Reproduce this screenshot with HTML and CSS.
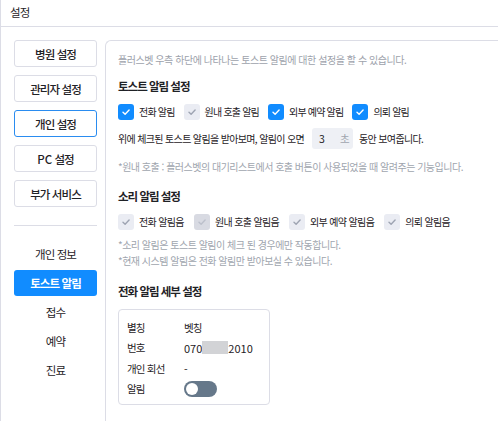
FILE: index.html
```html
<!DOCTYPE html>
<html lang="ko">
<head>
<meta charset="utf-8">
<link rel="stylesheet" href="styles.css">
</head>
<body>
<div class="window">
  <header class="header">설정</header>
  <div class="body">
    <nav class="sidebar">
      <div class="tab">병원 설정</div>
      <div class="tab">관리자 설정</div>
      <div class="tab active">개인 설정</div>
      <div class="tab"><span class="num">PC</span>&nbsp;설정</div>
      <div class="tab">부가 서비스</div>
      <div class="divider"></div>
      <div class="sub">개인 정보</div>
      <div class="sub selected">토스트 알림</div>
      <div class="sub">접수</div>
      <div class="sub">예약</div>
      <div class="sub">진료</div>
    </nav>
    <main class="panel">
      <p class="desc">플러스벳 우측 하단에 나타나는 토스트 알림에 대한 설정을 할 수 있습니다.</p>
      <h2 class="title">토스트 알림 설정</h2>
      <div class="checks">
        <label class="chk"><span class="box on"><svg viewBox="0 0 16 16"><path d="M5 8.3l2.1 2 4-4.2"/></svg></span>전화 알림</label>
        <label class="chk"><span class="box off"><svg viewBox="0 0 16 16"><path d="M5 8.3l2.1 2 4-4.2"/></svg></span>원내 호출 알림</label>
        <label class="chk"><span class="box on"><svg viewBox="0 0 16 16"><path d="M5 8.3l2.1 2 4-4.2"/></svg></span>외부 예약 알림</label>
        <label class="chk"><span class="box on"><svg viewBox="0 0 16 16"><path d="M5 8.3l2.1 2 4-4.2"/></svg></span>의뢰 알림</label>
      </div>
      <div class="duration"><span>위에 체크된 토스트 알림을 받아보며, 알림이 오면</span><span class="input"><span class="num">3</span><span class="unit">초</span></span><span>동안 보여줍니다.</span></div>
      <p class="note first">*원내 호출 : 플러스벳의 대기리스트에서 호출 버튼이 사용되었을 때 알려주는 기능입니다.</p>
      <h2 class="title t2">소리 알림 설정</h2>
      <div class="checks sound">
        <label class="chk"><span class="box off"><svg viewBox="0 0 16 16"><path d="M5 8.3l2.1 2 4-4.2"/></svg></span>전화 알림음</label>
        <label class="chk"><span class="box dis"><svg viewBox="0 0 16 16"><path d="M5 8.3l2.1 2 4-4.2"/></svg></span>원내 호출 알림음</label>
        <label class="chk"><span class="box off"><svg viewBox="0 0 16 16"><path d="M5 8.3l2.1 2 4-4.2"/></svg></span>외부 예약 알림음</label>
        <label class="chk"><span class="box off"><svg viewBox="0 0 16 16"><path d="M5 8.3l2.1 2 4-4.2"/></svg></span>의뢰 알림음</label>
      </div>
      <p class="note n2">*소리 알림은 토스트 알림이 체크 된 경우에만 작동합니다.</p>
      <p class="note n3">*현재 시스템 알림은 전화 알림만 받아보실 수 있습니다.</p>
      <h2 class="title t3">전화 알림 세부 설정</h2>
      <div class="card">
        <div class="row"><span class="k">별칭</span><span class="v">벳칭</span></div>
        <div class="row"><span class="k">번호</span><span class="v"><span class="num">070</span><span class="mask"></span><span class="num">2010</span></span></div>
        <div class="row"><span class="k">개인 회선</span><span class="v">-</span></div>
        <div class="row"><span class="k">알림</span><span class="v"><span class="toggle"><span class="knob"></span></span></span></div>
      </div>
    </main>
  </div>
</div>
</body>
</html>
```
FILE: styles.css
```css
* { box-sizing: border-box; }
html, body { margin: 0; padding: 0; background: #fff; }
body {
  font-family: "Noto Sans CJK KR", "Noto Sans", sans-serif;
  color: #1f2226;
  width: 498px;
  height: 421px;
  overflow: hidden;
}
.num { letter-spacing: 0; }
.window {
  border-left: 1px solid #dcdde6;
  height: 421px;
  display: flex;
  flex-direction: column;
}
.header {
  height: 27px;
  border-bottom: 1px solid #dcdde6;
  font-size: 11.5px;
  letter-spacing: -0.8px;
  line-height: 24px;
  padding-left: 9px;
}
.body {
  flex: 1;
  display: flex;
}
.sidebar {
  width: 104px;
  padding: 13px 8px 0 13px;
  display: flex;
  flex-direction: column;
}
.tab {
  height: 27px;
  border: 1px solid #dcdde6;
  border-radius: 3px;
  font-size: 11.5px;
  letter-spacing: -0.9px;
  font-weight: 500;
  display: flex;
  align-items: center;
  justify-content: center;
  margin-bottom: 8px;
}
.tab.active { border-color: #2a8cf0; }
.divider {
  height: 1px;
  background: #dcdde6;
  margin: 10px 0 15px;
}
.sub {
  height: 26px;
  font-size: 11.5px;
  letter-spacing: -0.9px;
  display: flex;
  align-items: center;
  justify-content: center;
  margin-bottom: 3px;
}
.sub.selected {
  background: #118cff;
  color: #fff;
  font-weight: 700;
  border-radius: 3px;
}
.panel {
  flex: 1;
  margin-top: 13px;
  border-left: 1px solid #dcdde6;
  border-top: 1px solid #dcdde6;
  border-top-left-radius: 6px;
  padding: 11px 0 0 12px;
  font-size: 10px;
  letter-spacing: -0.8px;
}
.desc {
  margin: 0;
  color: #9da2ab;
  line-height: 16px;
  letter-spacing: -0.45px;
}
.title {
  margin: 9px 0 0;
  font-size: 11.5px;
  letter-spacing: -1px;
  font-weight: 700;
  line-height: 18px;
}
.checks {
  display: flex;
  margin-top: 8px;
  gap: 9px;
}
.chk {
  display: flex;
  align-items: center;
  line-height: 17px;
}
.box {
  width: 16px;
  height: 16px;
  border-radius: 3px;
  margin-right: 5px;
  display: inline-flex;
  align-items: center;
  justify-content: center;
}
.box svg { width: 16px; height: 16px; fill: none; stroke-width: 1.4; stroke-linecap: round; stroke-linejoin: round; }
.box.on { background: #118cff; }
.box.on svg { stroke: #fff; }
.box.off { background: #eaecf3; }
.box.off svg { stroke: #9ea4b2; }
.box.dis { background: #d8dae2; }
.box.dis svg { stroke: #bcc0cb; }
.duration {
  margin-top: 8px;
  display: flex;
  align-items: center;
  letter-spacing: -0.65px;
}
.input {
  display: inline-flex;
  justify-content: space-between;
  align-items: center;
  width: 41px;
  height: 21px;
  background: #eef0f5;
  border-radius: 3px;
  padding: 0 4px 0 7px;
  margin: 0 6px 0 8px;
  font-size: 10.5px;
}
.input .unit { color: #a0a5ae; }
.note {
  margin: 0;
  color: #a0a5ae;
  line-height: 16px;
  letter-spacing: -0.5px;
}
.note.first { margin-top: 10px; }
.t2 { margin-top: 12px; }
.sound { gap: 10px; margin-top: 8px; }
.sound .chk { letter-spacing: -0.65px; }
.n2 { margin-top: 7px; }
.t3 { margin-top: 13px; }
.card {
  margin-top: 9px;
  width: 152px;
  border: 1px solid #dcdde6;
  border-radius: 4px;
  padding: 7px 0 5px 8px;
}
.row {
  display: flex;
  align-items: center;
  height: 20.5px;
  font-size: 10.5px;
}
.k { width: 57px; }
.v { display: inline-flex; align-items: center; }
.v .num { font-size: 11px; }
.mask {
  display: inline-block;
  width: 26px;
  height: 13px;
  background: #d2d3d6;
}
.toggle {
  width: 33px;
  height: 16px;
  border-radius: 8px;
  background: #66788a;
  display: inline-flex;
  align-items: center;
  padding-left: 2px;
}
.knob {
  width: 12px;
  height: 12px;
  border-radius: 50%;
  background: #fff;
}
```
